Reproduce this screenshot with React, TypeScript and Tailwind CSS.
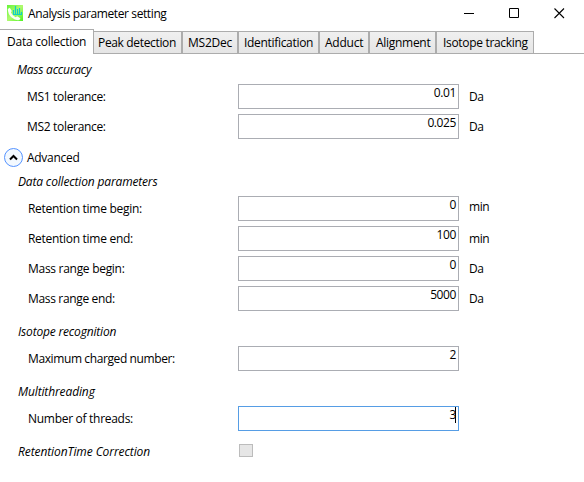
const tabs = [
  { label: "Peak detection", box: "w-[88px] border-l-0 pl-[4px]", text: "tracking-[-0.34px]" },
  { label: "MS2Dec", box: "w-[56px] pl-[5px]", text: "tracking-[-0.24px]" },
  { label: "Identification", box: "w-[81px] pl-[5px]", text: "tracking-[-0.31px]" },
  { label: "Adduct", box: "w-[50px] pl-[5px]", text: "tracking-[-0.24px]" },
  { label: "Alignment", box: "w-[67px] pl-[6px]", text: "tracking-[-0.29px]" },
  { label: "Isotope tracking", box: "w-[98px] pl-[6px]", text: "tracking-[-0.32px]" },
];

type FieldProps = {
  label: string;
  value: string;
  unit?: string;
  active?: boolean;
  indent?: string;
  tracking?: string;
  unitClass?: string;
};

function Field({ label, value, unit, active, indent = "pl-[28px]", tracking = "tracking-[-0.29px]", unitClass = "pt-[5px] pl-[10px]" }: FieldProps) {
  return (
    <div className="flex h-[30px] items-start">
      <div className={`w-[238px] shrink-0 pt-[5px] ${indent} ${tracking}`}>{label}</div>
      <div className={`flex h-[25px] w-[221px] shrink-0 justify-end border bg-white pr-[2px] ${active ? "border-[#569de5]" : "border-[#abadb3]"}`}>
        <span className="tracking-[-0.4px]">{value}</span>
        {active && <span className="-ml-px h-[16px] w-px bg-black" />}
      </div>
      {unit && <div className={`tracking-[-0.4px] ${unitClass}`}>{unit}</div>}
    </div>
  );
}

function Heading({ children, className }: { children: string; className: string }) {
  return <div className={`italic ${className}`}>{children}</div>;
}

function AppIcon() {
  return (
    <svg width="16" height="16" viewBox="0 0 16 16" className="mt-[5px] ml-[7px]">
      <defs>
        <linearGradient id="leaf" x1="0" y1="0" x2="1" y2="1">
          <stop offset="0" stopColor="#65f536" />
          <stop offset="0.5" stopColor="#b0fa70" />
          <stop offset="1" stopColor="#4cf320" />
        </linearGradient>
      </defs>
      <rect width="16" height="16" fill="url(#leaf)" />
      <path d="M6.5 9V5M8.5 9V1M10.5 9V4M12.5 9V3M14.5 9V7M6 9.5H15" stroke="#10cfc4" strokeWidth="1.2" />
      <path d="M0.8 4L2.8 2.8L4.8 6L3.9 7.5Q5.5 10.8 8.5 12.2L10.2 11.2L13.4 13.2L12.4 15Q8.5 15.7 4.7 12.6Q0.8 9 0.8 4Z" fill="#fafff5" />
    </svg>
  );
}

function WindowControls() {
  return (
    <div className="mt-[8px] flex h-[11px] gap-[35px]">
      <svg width="10" height="11" viewBox="0 0 10 11">
        <path d="M0 5.5H10" stroke="#000" />
      </svg>
      <svg width="10" height="11" viewBox="0 0 10 11">
        <path d="M0.5 0.5H9.5V9.5H0.5Z" fill="none" stroke="#000" />
      </svg>
      <svg width="11" height="11" viewBox="0 0 11 11">
        <path d="M0.5 0.5L10 10M10 0.5L0.5 10" stroke="#000" strokeWidth="1.1" />
      </svg>
    </div>
  );
}

export default function App() {
  return (
    <main className="h-[482px] w-[584px] overflow-hidden bg-white font-['Open_Sans','Noto_Sans',sans-serif] text-[12px] leading-[16px] whitespace-nowrap text-black">
      <header className="flex h-[29px] items-start">
        <AppIcon />
        <h1 className="mt-[6px] ml-[5px] w-[436px] tracking-[-0.39px]">Analysis parameter setting</h1>
        <WindowControls />
      </header>
      <nav className="flex h-[25px] items-end">
        <div className="h-[25px] w-[94px] border-t border-r border-[#acacac] pt-[4px] pl-[7px] tracking-[-0.24px]">Data collection</div>
        {tabs.map((tab) => (
          <div key={tab.label} className={`h-[23px] border border-[#acacac] bg-linear-to-b from-[#f0f0f0] to-[#e5e5e5] pt-[3px] ${tab.box} ${tab.text}`}>
            {tab.label}
          </div>
        ))}
        <div className="h-px grow bg-[#acacac]" />
      </nav>
      <section className="pt-[8px]">
        <Heading className="h-[22px] pl-[17px] tracking-[-0.24px]">Mass accuracy</Heading>
        <Field label="MS1 tolerance:" value="0.01" unit="Da" indent="pl-[27px]" tracking="tracking-[-0.32px]" />
        <Field label="MS2 tolerance:" value="0.025" unit="Da" indent="pl-[27px]" tracking="tracking-[-0.32px]" />
        <div className="flex h-[30px] pt-[4px] pl-[4px]">
          <svg width="19" height="19" viewBox="0 0 19 19" fill="none">
            <circle cx="9.5" cy="9.5" r="9" fill="#f3f9ff" stroke="#5593ff" />
            <path d="M6 11.5L9.5 8L13 11.5" stroke="#000" strokeWidth="2" />
          </svg>
          <span className="ml-[4px] pt-[2px] tracking-[-0.29px]">Advanced</span>
        </div>
        <Heading className="h-[22px] pl-[18px] tracking-[-0.16px]">Data collection parameters</Heading>
        <Field label="Retention time begin:" value="0" unit="min" unitClass="pt-[3px] pl-[10px]" />
        <Field label="Retention time end:" value="100" unit="min" />
        <Field label="Mass range begin:" value="0" unit="Da" />
        <Field label="Mass range end:" value="5000" unit="Da" tracking="tracking-[-0.34px]" />
        <Heading className="h-[30px] pt-[8px] pl-[18px] tracking-[-0.18px]">Isotope recognition</Heading>
        <Field label="Maximum charged number:" value="2" tracking="tracking-[-0.39px]" />
        <Heading className="h-[30px] pt-[8px] pl-[18px] tracking-[-0.12px]">Multithreading</Heading>
        <Field label="Number of threads:" value="3" active />
        <div className="flex pt-[8px]">
          <Heading className="w-[239px] pl-[18px] tracking-[-0.09px]">RetentionTime Correction</Heading>
          <span className="h-[13px] w-[14px] border border-[#bcbcbc] bg-[#e6e6e6]" />
        </div>
      </section>
    </main>
  );
}
